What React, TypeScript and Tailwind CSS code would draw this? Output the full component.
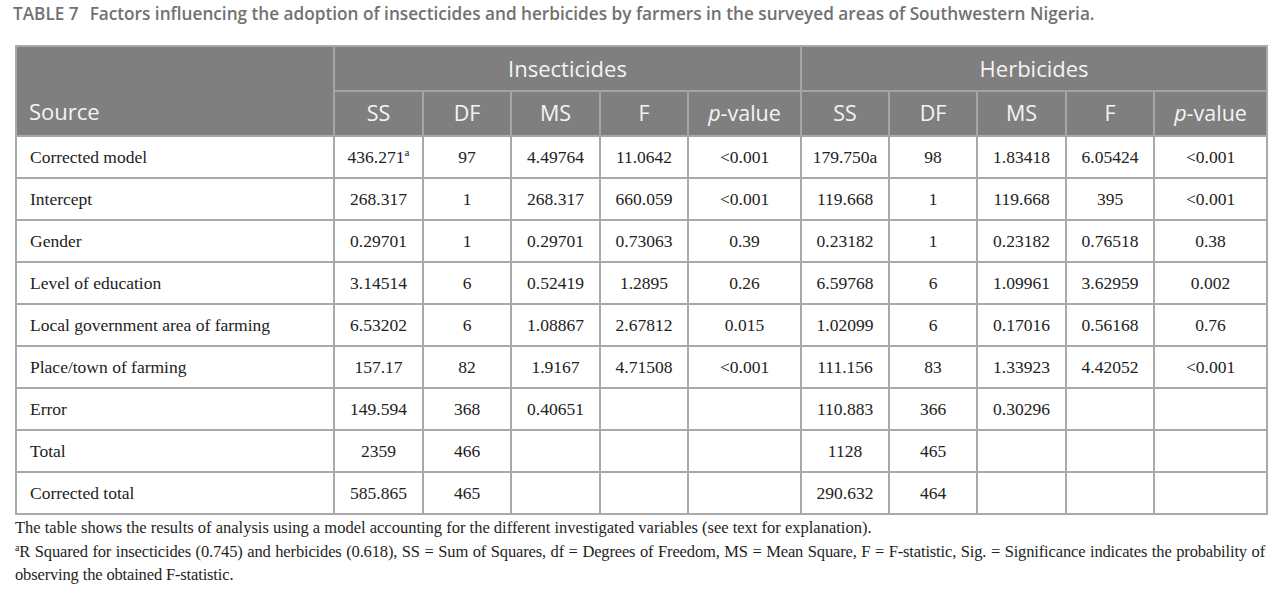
const rows: string[][] = [
  ['Corrected model', '436.271|a', '97', '4.49764', '11.0642', '<0.001', '179.750a', '98', '1.83418', '6.05424', '<0.001'],
  ['Intercept', '268.317', '1', '268.317', '660.059', '<0.001', '119.668', '1', '119.668', '395', '<0.001'],
  ['Gender', '0.29701', '1', '0.29701', '0.73063', '0.39', '0.23182', '1', '0.23182', '0.76518', '0.38'],
  ['Level of education', '3.14514', '6', '0.52419', '1.2895', '0.26', '6.59768', '6', '1.09961', '3.62959', '0.002'],
  ['Local government area of farming', '6.53202', '6', '1.08867', '2.67812', '0.015', '1.02099', '6', '0.17016', '0.56168', '0.76'],
  ['Place/town of farming', '157.17', '82', '1.9167', '4.71508', '<0.001', '111.156', '83', '1.33923', '4.42052', '<0.001'],
  ['Error', '149.594', '368', '0.40651', '', '', '110.883', '366', '0.30296', '', ''],
  ['Total', '2359', '466', '', '', '', '1128', '465', '', '', ''],
  ['Corrected total', '585.865', '465', '', '', '', '290.632', '464', '', '', ''],
]

const widths = [318, 89, 88, 89, 88, 113, 88, 88, 89, 88, 113]
const sub = ['SS', 'DF', 'MS', 'F', 'p']

function Cell({ v }: { v: string }) {
  if (v.includes('|')) {
    const [n, s] = v.split('|')
    return (
      <>
        {n}
        <sup className="text-[11px] leading-none -top-[7px]">{s}</sup>
      </>
    )
  }
  return <>{v}</>
}

function SubHead({ k }: { k: string }) {
  if (k === 'p')
    return (
      <>
        <i>p</i>-value
      </>
    )
  return <>{k}</>
}

export default function App() {
  return (
    <div className="w-[1280px] h-[589px] bg-white px-[15px] pt-[2px] overflow-hidden">
      <h1 className="text-[17.2px] leading-[23px] font-semibold text-[#717171] font-['Open_Sans',sans-serif] -ml-[2px]">
        TABLE 7<span className="inline-block w-[11px]" />Factors influencing the adoption of insecticides and herbicides by farmers in the surveyed areas of Southwestern Nigeria.
      </h1>

      <table className="mt-[20px] w-[1251px] table-fixed border-collapse border-2 border-[#a9a9a9]">
        <colgroup>
          {widths.map((w, i) => (
            <col key={i} style={{ width: w }} />
          ))}
        </colgroup>
        <thead className="bg-[#7f7f7f] text-[#f4f4f4] font-['Open_Sans',sans-serif]">
          <tr className="h-[45px]">
            <th rowSpan={2} className="align-bottom text-left font-normal text-[22px] pl-[12px] pb-[7px] border-r-2 border-[#a5a5a5]">
              Source
            </th>
            <th colSpan={5} className="font-normal text-[22px] border-r-2 border-b-2 border-[#a5a5a5]">
              Insecticides
            </th>
            <th colSpan={5} className="font-normal text-[22px] border-b-2 border-[#a5a5a5]">
              Herbicides
            </th>
          </tr>
          <tr className="h-[45px]">
            {[...sub, ...sub].map((k, i) => (
              <th key={i} className={`font-normal text-[21.5px] ${i < 9 ? 'border-r-2 border-[#a5a5a5]' : ''}`}>
                <SubHead k={k} />
              </th>
            ))}
          </tr>
        </thead>
        <tbody className="font-['Liberation_Serif',serif] text-[17.5px] leading-[22px] text-[#222]">
          {rows.map((r, ri) => (
            <tr key={ri} className="h-[42px] border-t-2 border-[#a9a9a9]">
              {r.map((v, ci) => (
                <td
                  key={ci}
                  className={`border-l-2 border-[#a9a9a9] ${ci === 0 ? 'text-left pl-[13px]' : 'text-center'}`}
                >
                  <Cell v={v} />
                </td>
              ))}
            </tr>
          ))}
        </tbody>
      </table>

      <div className="mt-[1px] font-['Liberation_Serif',serif] text-[16.5px] leading-[23.5px] text-[#1e1e1e] text-justify">
        <p>
          The table shows the results of analysis using a model accounting for the different investigated variables (see text for explanation).
        </p>
        <p className="tracking-[-0.15px]">
          <sup className="text-[10px] leading-none -top-[6px]">a</sup>R Squared for insecticides (0.745) and herbicides (0.618), SS = Sum of Squares, df = Degrees of Freedom, MS = Mean Square, F = F-statistic, Sig. = Significance indicates the probability of observing the obtained F-statistic.
        </p>
      </div>
    </div>
  )
}
